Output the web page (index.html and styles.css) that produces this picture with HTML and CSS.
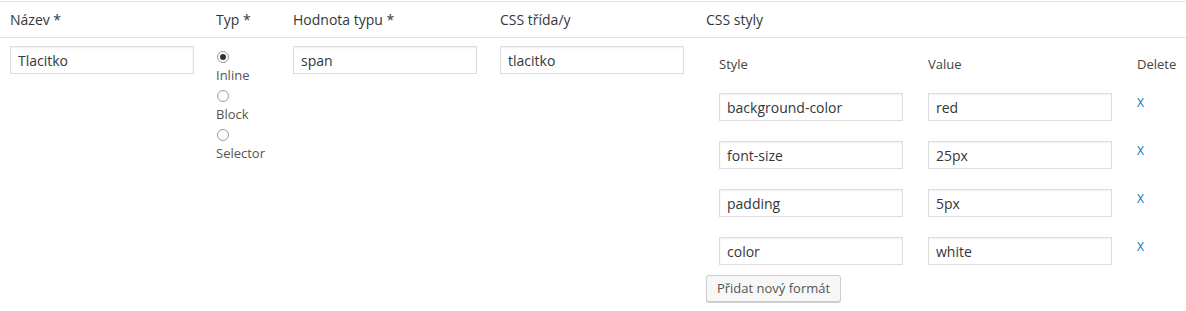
FILE: index.html
```html
<!DOCTYPE html>
<html lang="cs">
<head>
<meta charset="utf-8">
<title>Formáty</title>
<link rel="stylesheet" href="styles.css">
</head>
<body>
<table class="formats">
  <colgroup>
    <col class="c-name"><col class="c-type"><col class="c-val"><col class="c-cls"><col class="c-css">
  </colgroup>
  <thead>
    <tr>
      <th>Název *</th>
      <th>Typ *</th>
      <th>Hodnota typu *</th>
      <th>CSS třída/y</th>
      <th>CSS styly</th>
    </tr>
  </thead>
  <tbody>
    <tr>
      <td><input class="field" type="text" value="Tlacitko"></td>
      <td>
        <label class="radio-item"><input class="radio" type="radio" name="typ" checked><span>Inline</span></label>
        <label class="radio-item"><input class="radio" type="radio" name="typ"><span>Block</span></label>
        <label class="radio-item"><input class="radio" type="radio" name="typ"><span>Selector</span></label>
      </td>
      <td><input class="field" type="text" value="span"></td>
      <td><input class="field" type="text" value="tlacitko"></td>
      <td class="css-cell">
        <table class="styles">
          <thead>
            <tr><th>Style</th><th>Value</th><th>Delete</th></tr>
          </thead>
          <tbody>
            <tr><td><input class="field" type="text" value="background-color"></td><td><input class="field" type="text" value="red"></td><td><a class="del" href="#">X</a></td></tr>
            <tr><td><input class="field" type="text" value="font-size"></td><td><input class="field" type="text" value="25px"></td><td><a class="del" href="#">X</a></td></tr>
            <tr><td><input class="field" type="text" value="padding"></td><td><input class="field" type="text" value="5px"></td><td><a class="del" href="#">X</a></td></tr>
            <tr><td><input class="field" type="text" value="color"></td><td><input class="field" type="text" value="white"></td><td><a class="del" href="#">X</a></td></tr>
          </tbody>
        </table>
        <button class="button" type="button">Přidat nový formát</button>
      </td>
    </tr>
  </tbody>
</table>
</body>
</html>
```

FILE: styles.css
```css
html, body {
  margin: 0;
  padding: 0;
  background: #fff;
}
body {
  font-family: "Open Sans", "Noto Sans", sans-serif;
  font-size: 14px;
  color: #32373c;
  padding-top: 1px;
}
.formats {
  width: 1186px;
  border-collapse: collapse;
  table-layout: fixed;
  border-top: 1px solid #e1e1e1;
}
.c-name { width: 206px; }
.c-type { width: 77px; }
.c-val { width: 207px; }
.c-cls { width: 206px; }
.c-css { width: 490px; }

.formats > thead th {
  text-align: left;
  font-weight: 400;
  font-size: 14px;
  line-height: 19px;
  color: #32373c;
  padding: 8px 10px;
  border-bottom: 1px solid #e1e1e1;
}
.formats > tbody > tr > td {
  vertical-align: top;
  padding: 8px 10px;
}
.formats > tbody > tr > td.css-cell {
  padding: 8px 0 8px 10px;
}
.field {
  box-sizing: border-box;
  width: 184px;
  height: 28px;
  margin: 0;
  padding: 0 7px;
  border: 1px solid #ddd;
  box-shadow: inset 0 1px 2px rgba(0,0,0,.07);
  background: #fff;
  font-family: "Open Sans", "Noto Sans", sans-serif;
  font-size: 14px;
  color: #32373c;
  outline: none;
  display: block;
}
.radio-item {
  display: block;
  font-size: 13px;
  line-height: 19px;
  color: #555;
}
.radio-item span { display: block; }
.radio {
  -webkit-appearance: none;
  appearance: none;
  display: block;
  box-sizing: border-box;
  width: 12px;
  height: 12px;
  margin: 5px 0 3px 1px;
  border: 1px solid #9a9a9a;
  border-radius: 50%;
  background: #fff;
  position: relative;
}
.radio:checked::before {
  content: "";
  position: absolute;
  left: 2px;
  top: 2px;
  width: 6px;
  height: 6px;
  border-radius: 50%;
  background: #333;
}
.styles {
  border-collapse: collapse;
}
.styles th {
  text-align: left;
  font-weight: 400;
  font-size: 13px;
  line-height: 19px;
  color: #444;
  padding: 9px 12px 9px 13px;
}
.styles td {
  vertical-align: top;
  padding: 10px 12px 10px 13px;
  font-size: 13px;
  line-height: 19px;
}
.del {
  color: #0073aa;
  text-decoration: none;
  font-size: 12px;
}
.button {
  display: block;
  box-sizing: border-box;
  height: 27px;
  width: 135px;
  padding: 0 8px 1px;
  margin: 0;
  border: 1px solid #ccc;
  border-radius: 3px;
  background: #f7f7f7;
  box-shadow: 0 1px 0 #ccc;
  font-family: "Open Sans", "Noto Sans", sans-serif;
  font-size: 13px;
  line-height: 24px;
  color: #555;
  white-space: nowrap;
}
```
